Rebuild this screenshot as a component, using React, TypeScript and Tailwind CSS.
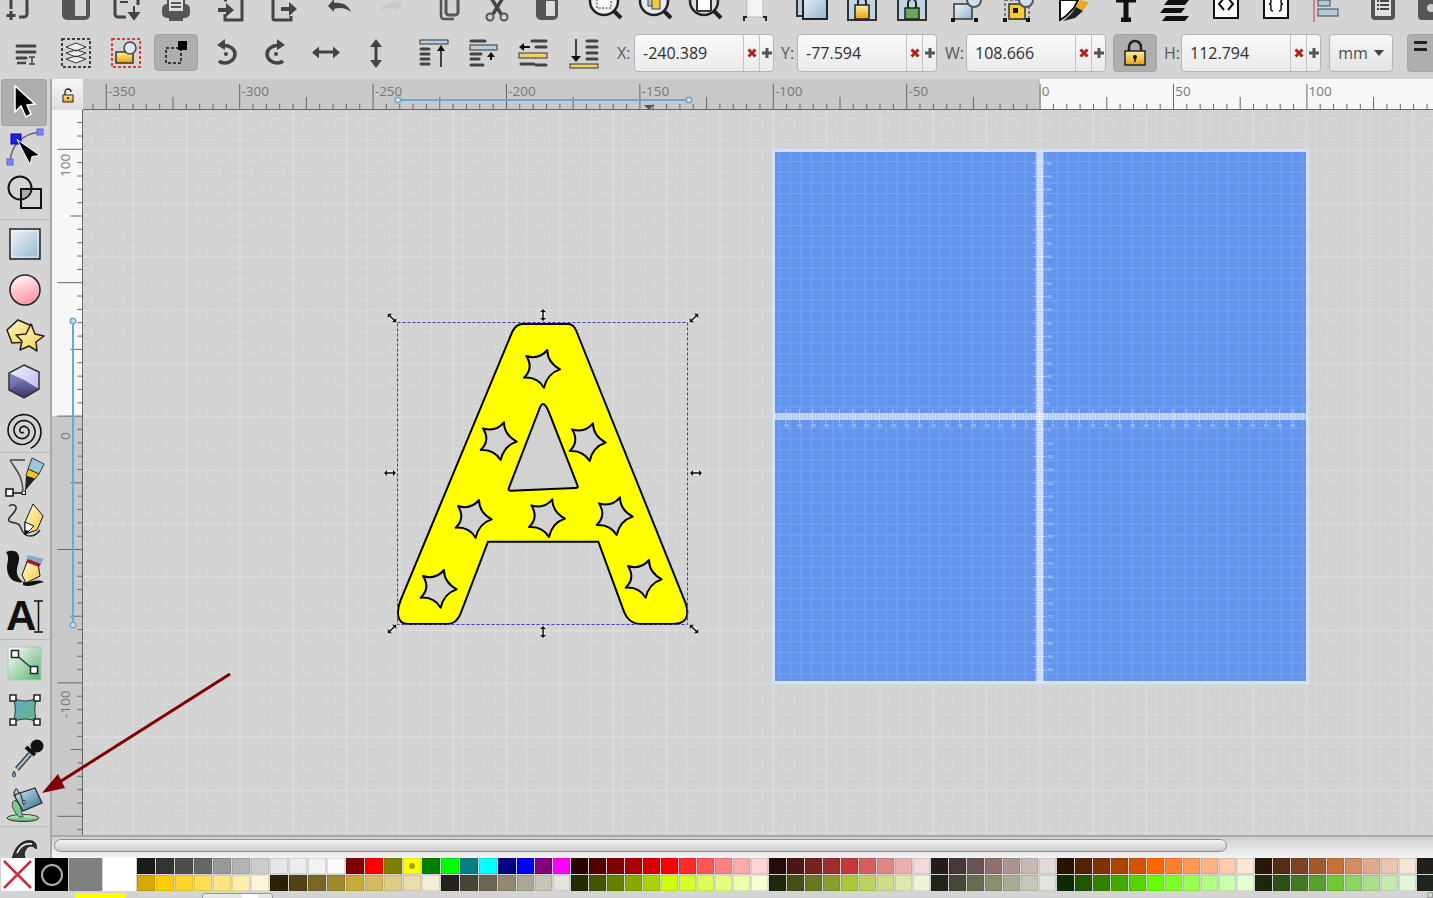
import type { ReactNode } from "react";

const D = "#444";

function I({ w = 50, h = 40, children }: { w?: number; h?: number; children: ReactNode }) {
  return (
    <svg width={w} height={h} viewBox={`0 0 ${w} ${h}`} className="shrink-0 block">
      {children}
    </svg>
  );
}

// top row is cut by the window, only the lower part of the icons shows
function Top({ className = "", children }: { className?: string; children: ReactNode }) {
  return (
    <div className={"w-[50px] shrink-0 " + className}>
      <svg width={50} height={36} viewBox="0 0 50 36" className="block">
        {children}
      </svg>
    </div>
  );
}

function Gradients() {
  const grad = (id: string, a: string, b: string, x2 = 1, y2 = 1) => (
    <linearGradient id={id} x1="0" y1="0" x2={x2} y2={y2}>
      <stop offset="0" stopColor={a} />
      <stop offset="1" stopColor={b} />
    </linearGradient>
  );
  return (
    <svg width="0" height="0" className="absolute">
      <defs>
        {grad("gBlue", "#f2f6fa", "#94b4d0")}
        {grad("gPink", "#ffffff", "#ff98a6", 0.4, 1)}
        {grad("gYel", "#fffbd0", "#f3cb3c")}
        {grad("gGold", "#fff0a0", "#e8a010", 0, 1)}
        {grad("gGreen", "#ffffff", "#58b070")}
        {grad("gMesh", "#5ea8d0", "#68b87c")}
        {grad("gBucket", "#d8eef4", "#2c6a90")}
        {grad("gPuddle", "#d8f4d8", "#50b060", 0, 1)}
        {grad("gBox", "#f0f0ff", "#b8b8f0")}
        {grad("gBoxD", "#7070b0", "#38386c", 0, 1)}
        <pattern id="pageGrid" x="1.1" y="1.1" width="10.67" height="10.67" patternUnits="userSpaceOnUse">
          <path d="M10.67 0H0V10.67" fill="none" stroke="#fff" strokeOpacity=".28" strokeWidth="1" />
        </pattern>
        <pattern id="aGrid" x="8" y="7" width="32" height="32" patternUnits="userSpaceOnUse">
          <path d="M32 0H0V32" fill="none" stroke="#fff" strokeOpacity=".28" strokeWidth="3" />
        </pattern>
      </defs>
    </svg>
  );
}

function TopRow() {
  return (
    <div className="h-[26px] flex items-end pb-[4px] overflow-hidden -ml-[4px] shrink-0">
      <Top>
        <path d="M31 14v14a3 3 0 0 1-3 3h-5M15 14v9" fill="none" stroke={D} strokeWidth="3" />
        <path d="M15 25v9M10.5 29.5h9" stroke={D} strokeWidth="3" />
      </Top>
      <Top className="ml-[5px]">
        <rect x="11" y="2" width="28" height="32" rx="5" fill="#555" />
        <rect x="24" y="14" width="11" height="16" rx="1" fill="#d4d4d4" />
      </Top>
      <Top>
        <path d="M14 14v14a3 3 0 0 0 3 3h8M37 14v5" fill="none" stroke={D} strokeWidth="3" />
        <path d="M33 20v9M28.5 27h9l-4.5 6z" fill={D} stroke={D} strokeWidth="2" />
        <path d="M19 16h8" stroke={D} strokeWidth="2" />
      </Top>
      <Top>
        <rect x="11" y="18" width="28" height="14" rx="5" fill="#555" />
        <rect x="17" y="4" width="16" height="22" fill="#ddd" stroke="#555" strokeWidth="2" />
        <path d="M20 17h10M20 21h10" stroke="#555" strokeWidth="2" />
        <rect x="18" y="28" width="14" height="7" fill="#555" />
      </Top>
      <Top className="ml-[6px]">
        <path d="M17 14h3M35 14v20H18v-6" fill="none" stroke={D} strokeWidth="3" />
        <path d="M11 22h8v-5l8 7-8 7v-5h-8z" fill={D} />
      </Top>
      <Top className="ml-[2px]">
        <path d="M14 14v18a2 2 0 0 0 2 2h16v-4" fill="none" stroke={D} strokeWidth="3" />
        <path d="M22 21h8v-5l8 7-8 7v-5h-8z" fill={D} />
      </Top>
      <Top className="ml-[6px]">
        <path d="M13 21l6-7v4c9-1 15 3 17 9-5-4-10-5-17-3v3z" fill="#444" transform="translate(0 -1)" />
      </Top>
      <Top>
        <path d="M37 21l-6-7v4c-9-1-15 3-17 9 5-4 10-5 17-3v3z" fill="#c8c8c8" transform="translate(0 -1)" />
      </Top>
      <Top className="ml-[7px]">
        <path d="M19 8v22a3 3 0 0 0 3 3h10" fill="none" stroke="#555" strokeWidth="2.5" />
        <rect x="24" y="4" width="12" height="25" rx="3" fill="none" stroke="#555" strokeWidth="3" />
      </Top>
      <Top>
        <path d="M18 10l11 18M32 10l-11 18" stroke="#444" strokeWidth="3.5" />
        <circle cx="18" cy="31" r="3.5" fill="none" stroke="#555" strokeWidth="2" />
        <circle cx="32" cy="31" r="3.5" fill="none" stroke="#555" strokeWidth="2" />
      </Top>
      <Top>
        <rect x="14" y="4" width="22" height="30" rx="5" fill="#555" />
        <rect x="24" y="15" width="9" height="15" rx="1" fill="#ddd" />
      </Top>
      <Top className="ml-[8px]">
        <circle cx="24" cy="15" r="14" fill="#eee" stroke="#222" strokeWidth="2.5" />
        <rect x="17" y="8" width="14" height="14" fill="#fff" stroke="#333" strokeDasharray="2 1.5" />
        <path d="M34 25l7 7" stroke="#222" strokeWidth="4" />
      </Top>
      <Top>
        <circle cx="24" cy="15" r="14" fill="#e4ecf2" stroke="#222" strokeWidth="2.5" />
        <rect x="18" y="9" width="9" height="11" fill="#a8c4d8" stroke="#444" />
        <rect x="22" y="13" width="8" height="10" fill="#f6c93a" stroke="#444" />
        <path d="M34 25l7 7" stroke="#222" strokeWidth="4" />
      </Top>
      <Top>
        <circle cx="24" cy="15" r="14" fill="#ddd" stroke="#222" strokeWidth="2.5" />
        <rect x="17" y="6" width="14" height="19" rx="1" fill="#fff" stroke="#333" strokeWidth="2" />
        <path d="M34 25l7 7" stroke="#222" strokeWidth="4" />
      </Top>
      <Top>
        <rect x="17" y="4" width="16" height="27" fill="#f4f4f4" stroke="#bbb" />
        <path d="M14 35v-4h3M36 35v-4h-3" fill="none" stroke="#222" strokeWidth="2" />
      </Top>
      <Top className="ml-[7px]">
        <rect x="10" y="2" width="14" height="28" fill="#b8cfe2" stroke="#333" strokeWidth="2" />
        <rect x="16" y="6" width="24" height="27" fill="url(#gBlue)" stroke="#222" strokeWidth="2" />
      </Top>
      <Top>
        <rect x="11" y="6" width="28" height="28" fill="#c0d4e4" stroke="#333" strokeWidth="2" />
        <rect x="18" y="19" width="14" height="14" fill="url(#gGold)" stroke="#222" strokeWidth="1.5" />
        <path d="M21 19v-3a4 4 0 0 1 8 0v3" fill="none" stroke="#222" strokeWidth="2" />
      </Top>
      <Top>
        <rect x="11" y="6" width="28" height="28" fill="#c0d4e4" stroke="#333" strokeWidth="2" />
        <rect x="18" y="22" width="14" height="11" fill="#68a858" stroke="#222" strokeWidth="1.5" />
        <path d="M21 22v-5a4 4 0 0 1 8 0v5" fill="none" stroke="#222" strokeWidth="2" />
      </Top>
      <Top className="ml-[5px]">
        <rect x="12" y="18" width="18" height="15" fill="url(#gBlue)" stroke="#333" strokeWidth="1.5" />
        <circle cx="32" cy="14" r="7" fill="#cfe0ee" stroke="#555" strokeWidth="2" />
        <rect x="9" y="32" width="4" height="4" fill="#111" />
        <rect x="32" y="32" width="4" height="4" fill="#111" />
      </Top>
      <Top className="ml-[1px]">
        <path d="M12 14h24v19H12z" fill="none" stroke="#222" strokeDasharray="3 2" />
        <rect x="16" y="18" width="16" height="15" fill="#f6c93a" stroke="#333" strokeWidth="1.5" />
        <rect x="20" y="22" width="5" height="5" fill="#111" />
        <circle cx="33" cy="14" r="7" fill="#cfe0ee" stroke="#555" strokeWidth="2" />
        <rect x="10" y="32" width="4" height="4" fill="#111" />
        <rect x="33" y="32" width="4" height="4" fill="#111" />
      </Top>
      <Top className="ml-[7px]">
        <path d="M10 14h18l-4 8-8 8-6 4z" fill="#fff" stroke="#111" strokeWidth="2" />
        <path d="M30 14l9 2-6 9-7-4z" fill="#e8a820" />
        <path d="M26 21l7 4-8 7-12 3c4-3 8-6 13-14z" fill="#222" />
      </Top>
      <Top className="ml-[1px]">
        <path d="M15 14h20M25 10v24M20 34h10" stroke="#111" strokeWidth="5" />
      </Top>
      <Top>
        <path d="M17 14h21l-4 5H13zM13 22h21l-4 5H9zM15 30h23l-4 5H11z" fill="#111" />
      </Top>
      <Top>
        <rect x="13" y="4" width="24" height="28" fill="#fdfdfd" stroke="#111" strokeWidth="2" />
        <path d="M23 12l-5 6 5 6M27 12l5 6-5 6" fill="none" stroke="#111" strokeWidth="2" />
      </Top>
      <Top>
        <rect x="13" y="4" width="24" height="28" fill="#fdfdfd" stroke="#111" strokeWidth="2" />
        <path d="M22 11c-3 0-2 3-2 5s-1 2-2 2c1 0 2 0 2 2s-1 5 2 5M28 11c3 0 2 3 2 5s1 2 2 2c-1 0-2 0-2 2s1 5-2 5" fill="none" stroke="#111" strokeWidth="1.5" />
      </Top>
      <Top>
        <path d="M13 0v36" stroke="#d03030" />
        <rect x="17" y="14" width="12" height="6" fill="#b0cade" stroke="#444" />
        <rect x="17" y="23" width="20" height="7" fill="#b0cade" stroke="#444" />
      </Top>
      <Top className="ml-[7px]">
        <rect x="13" y="2" width="24" height="32" rx="4" fill="#555" />
        <rect x="17" y="6" width="16" height="24" fill="#e0e0e0" />
        <path d="M19 15h12M19 19h12M19 23h12" stroke="#444" strokeWidth="2" strokeDasharray="2 1 9 0" />
      </Top>
      <Top className="-ml-[7px]">
        <rect x="17" y="4" width="24" height="30" rx="4" fill="#555" />
        <circle cx="30" cy="22" r="4" fill="#ccc" />
      </Top>
    </div>
  );
}

function Bars({ d }: { d: string }) {
  return <path d={d} fill="none" stroke={D} strokeWidth="3" strokeLinecap="round" />;
}

function SpinField({ label, value, labelClass }: { label: string; value: string; labelClass: string }) {
  return (
    <>
      <span className={"text-[16px] text-[#585858] shrink-0 text-left " + labelClass}>{label}</span>
      <div className="flex w-[140px] h-[38px] shrink-0 rounded-[4px] border border-[#b4b4b4] bg-gradient-to-b from-[#f9f9f9] to-[#ebebeb] overflow-hidden">
        <div className="w-[108px] pl-[8px] flex items-center text-[16px] text-[#2e2e2e] shrink-0">{value}</div>
        <div className="w-[16px] border-l border-[#c4c4c4] flex items-center justify-center shrink-0">
          <svg width="10" height="10" viewBox="0 0 10 10">
            <path d="M1.5 1.5l7 7M8.5 1.5l-7 7" stroke="#b02020" strokeWidth="3" />
          </svg>
        </div>
        <div className="flex-1 border-l border-[#c4c4c4] flex items-center justify-center">
          <svg width="10" height="10" viewBox="0 0 10 10">
            <path d="M5 0v10M0 5h10" stroke="#555" strokeWidth="3" />
          </svg>
        </div>
      </div>
    </>
  );
}

function CommandRow() {
  return (
    <div className="h-[53px] flex items-center shrink-0 pl-[1px] bg-[#d4d4d4]">
      <I>
        <Bars d="M16 13h18M16 19h18M16 25h9" />
        <path d="M28 24h6M31 24v7M28 31h6" stroke={D} strokeWidth="1.5" fill="none" />
        <path d="M16 30h9" stroke={D} strokeWidth="2.5" />
      </I>
      <I>
        <rect x="11" y="6" width="28" height="28" fill="none" stroke="#111" strokeWidth="1.5" strokeDasharray="3 2" />
        <path d="M15 14l10-4 10 4-10 4zM15 20l10-3 10 3-10 4zM15 26l10-3 10 3-10 4z" fill="#eee" stroke="#333" strokeLinejoin="round" />
      </I>
      <I>
        <rect x="11" y="6" width="28" height="28" fill="none" stroke="#d01010" strokeWidth="1.5" strokeDasharray="3 2" />
        <rect x="15" y="19" width="17" height="11" fill="url(#gGold)" stroke="#333" strokeWidth="1.5" />
        <circle cx="29" cy="15" r="6" fill="#dbe8f2" stroke="#444" strokeWidth="1.5" />
      </I>
      <div className="w-[44px] h-[37px] mx-[3px] rounded-[4px] bg-[#aeaeae] border border-[#a4a4a4] flex items-center justify-center shrink-0">
        <svg width="30" height="30" viewBox="0 0 30 30">
          <rect x="5" y="10" width="15" height="15" fill="none" stroke="#111" strokeWidth="1.5" strokeDasharray="3 2" />
          <rect x="17" y="3" width="9" height="9" fill="#000" />
        </svg>
      </div>
      <I w={50}>
        <path d="M20 13c8-2 14 3 14 8s-5 9-10 9c-3 0-5-1-6-2" fill="none" stroke="#444" strokeWidth="3.5" />
        <path d="M16 12l8-6v11z" fill="#444" />
        <circle cx="25" cy="21" r="2" fill="#444" />
      </I>
      <I>
        <path d="M30 13c-8-2-14 3-14 8s5 9 10 9c3 0 5-1 6-2" fill="none" stroke="#444" strokeWidth="3.5" />
        <path d="M34 12l-8-6v11z" fill="#444" />
        <circle cx="25" cy="21" r="2" fill="#444" />
      </I>
      <I>
        <path d="M15 19h20" stroke="#444" strokeWidth="3" />
        <path d="M11 19.5l7-6v12zM39 19.5l-7-6v12z" fill="#444" />
      </I>
      <I>
        <path d="M25 11v20" stroke="#444" strokeWidth="3" />
        <path d="M25 6l-6 8h12zM25 35l-6-8h12z" fill="#444" />
      </I>
      <div className="ml-[7px] shrink-0">
        <I>
          <rect x="12" y="7" width="28" height="4" fill="#b8cfe2" stroke="#333" strokeWidth="1" />
          <Bars d="M13 16h8M13 21h8M13 26h8M13 31h8" />
          <path d="M33 15v19" stroke="#111" strokeWidth="1.5" />
          <path d="M33 12l-4 6h8z" fill="#111" />
        </I>
      </div>
      <I>
        <Bars d="M13 8h14M13 26h8M13 32h12" />
        <rect x="12" y="12" width="27" height="5" fill="#b8cfe2" stroke="#333" />
        <Bars d="M13 21h10" />
        <path d="M33 19l-4 5h8z" fill="#111" />
        <path d="M33 23v4" stroke="#111" strokeWidth="2" />
      </I>
      <I>
        <Bars d="M24 8h14M28 14h10M28 32h10" />
        <rect x="11" y="20" width="28" height="5" fill="#f0cf6a" stroke="#333" />
        <path d="M22 14h-8" stroke="#111" strokeWidth="2" />
        <path d="M11 14l5-4v8z" fill="#111" />
        <Bars d="M13 31h13" />
      </I>
      <I>
        <Bars d="M29 8h10M29 14h10M29 20h10M29 26h10" />
        <path d="M18 6v19" stroke="#111" strokeWidth="1.5" />
        <path d="M18 29l-5-6h10z" fill="#111" />
        <rect x="12" y="31" width="28" height="4" fill="#f0cf6a" stroke="#333" />
      </I>
      <div className="pl-[9px] flex items-center">
        <SpinField label="X:" value="-240.389" labelClass="w-[17px]" />
        <SpinField label="Y:" value="-77.594" labelClass="w-[16px] ml-[7px]" />
        <SpinField label="W:" value="108.666" labelClass="w-[21px] ml-[8px]" />
        <div className="w-[44px] h-[38px] ml-[7px] rounded-[4px] bg-[#aeaeae] border border-[#a4a4a4] flex items-center justify-center shrink-0">
          <svg width="26" height="28" viewBox="0 0 26 28">
            <path d="M7 12V8a6 6 0 0 1 12 0v4" fill="none" stroke="#222" strokeWidth="2.5" />
            <rect x="3" y="12" width="20" height="14" fill="url(#gGold)" stroke="#222" strokeWidth="1.5" />
            <circle cx="13" cy="18" r="2" fill="#111" />
            <path d="M13 18v5" stroke="#111" strokeWidth="1.5" />
          </svg>
        </div>
        <SpinField label="H:" value="112.794" labelClass="w-[17px] ml-[7px]" />
        <div className="w-[64px] h-[38px] ml-[8px] rounded-[4px] border border-[#b4b4b4] bg-gradient-to-b from-[#f6f6f6] to-[#e4e4e4] flex items-center justify-center gap-[6px] text-[16px] text-[#4c4c4c] shrink-0">
          mm
          <svg width="10" height="6" viewBox="0 0 10 6">
            <path d="M0 0h10L5 6z" fill="#444" />
          </svg>
        </div>
        <div className="w-[30px] h-[38px] ml-[14px] rounded-[4px] bg-[#aeaeae] border border-[#a4a4a4] flex flex-col gap-[4px] pt-[6px] pl-[6px] shrink-0">
          <div className="w-[13px] h-[3px] bg-[#222]" />
          <div className="w-[13px] h-[3px] bg-[#222]" />
        </div>
      </div>
    </div>
  );
}

function Tool({ active, children }: { active?: boolean; children: ReactNode }) {
  return (
    <div className={"h-[46.5px] w-[46px] ml-[1px] shrink-0 rounded-[3px] " + (active ? "bg-[#aeaeae] border border-[#a4a4a4]" : "")}>
      <svg width="46" height="46" viewBox="0 0 46 46" className={active ? "-m-px" : ""}>
        {children}
      </svg>
    </div>
  );
}

function spiral(cx: number, cy: number) {
  let d = "";
  for (let t = 0; t <= 19; t += 0.25) {
    const r = 1 + t * 0.95;
    d += (t === 0 ? "M" : "L") + (cx + r * Math.cos(t + 1)).toFixed(1) + " " + (cy + r * Math.sin(t + 1)).toFixed(1);
  }
  return d;
}

function ToolSep() {
  return <div className="h-px bg-[#bcbcbc] w-[50px] shrink-0" />;
}

function ToolBar() {
  return (
    <div className="w-[52px] shrink-0 border-r-2 border-[#a8a8a8] flex flex-col overflow-hidden bg-[#d4d4d4]">
      <Tool active>
        <polygon points="14,7 14,33 20,27 25,38 30,35 26,26 34,25" fill="#000" stroke="#fff" strokeWidth="1.5" />
      </Tool>
      <Tool>
        <path d="M9 36C10 20 20 8 39 6" fill="none" stroke="#666" strokeWidth="1.5" />
        <rect x="6" y="33" width="6" height="6" fill="#8080ff" stroke="#6060e0" />
        <rect x="36" y="3" width="6" height="6" fill="#8080ff" stroke="#6060e0" />
        <rect x="10" y="8" width="10" height="10" fill="#2020e0" stroke="#0000c0" />
        <polygon points="16,13.5 39,29.5 31,30.5 29,38.5" fill="#000" stroke="#fff" />
      </Tool>
      <Tool>
        <rect x="20" y="17" width="20" height="19" fill="#d4d4d4" stroke="#111" strokeWidth="2" />
        <circle cx="19" cy="16" r="11.5" fill="none" stroke="#111" strokeWidth="2" />
        <path d="M21 18h8.500a11.500 11.500 0 0 1-8.500 8.500z" fill="#aaa" />
      </Tool>
      <ToolSep />
      <Tool>
        <rect x="9" y="9" width="30" height="30" fill="url(#gBlue)" stroke="#222" strokeWidth="1.5" />
        <rect x="11" y="11" width="26" height="26" fill="none" stroke="#fff" strokeOpacity=".7" />
      </Tool>
      <Tool>
        <circle cx="24" cy="24" r="15" fill="url(#gPink)" stroke="#222" strokeWidth="1.5" />
      </Tool>
      <Tool>
        <polygon points="17,7 31,13 27,29 11,30 6,17" fill="url(#gYel)" stroke="#222" strokeWidth="1.5" />
        <polygon points="30,11 34,21 43,23 35,29 36,38 28,33 19,37 21,28 15,22 25,21" fill="url(#gYel)" stroke="#222" strokeWidth="1.5" strokeLinejoin="round" />
      </Tool>
      <Tool>
        <polygon points="23,6 38,13 38,30 23,39 8,31 8,14" fill="url(#gBox)" />
        <polygon points="8,14 23,21 23,39 8,31" fill="url(#gBoxD)" opacity=".8" />
        <polygon points="23,21 38,30 23,39 8,31" fill="url(#gBoxD)" />
        <polygon points="23,6 38,13 38,30 23,39 8,31 8,14" fill="none" stroke="#333" strokeWidth="1.5" />
      </Tool>
      <Tool>
        <path d={spiral(22, 25)} fill="none" stroke="#111" strokeWidth="1.6" />
      </Tool>
      <ToolSep />
      <Tool>
        <path d="M9 7h15M9 7c5 9 12 14 13 30" fill="none" stroke="#444" strokeWidth="1.5" />
        <path d="M9 40h14" stroke="#111" strokeWidth="1.5" />
        <rect x="5" y="36" width="7" height="7" fill="#fff" stroke="#111" strokeWidth="1.5" />
        <rect x="21" y="38" width="3.5" height="3.5" fill="#fff" stroke="#111" />
        <polygon points="31,5 43,11 38,21 27,16" fill="#9cc8d8" stroke="#333" />
        <polygon points="27,16 38,21 34,26 25,23" fill="#f5c520" stroke="#333" />
        <polygon points="25,23 34,26 24,38" fill="#222" />
      </Tool>
      <Tool>
        <path d="M8 6c5-3 9 0 6 5s-8 7-6 10 8 0 11 5c2 5 4 10 10 10 5 0 8-3 10-6" fill="none" stroke="#333" strokeWidth="1.6" />
        <polygon points="32,4 42,16 36,30 24,34 24,22" fill="url(#gYel)" stroke="#111" />
        <polygon points="24,22 33,26 24,35" fill="#fff" stroke="#111" />
        <polygon points="24,30 28,31 24,36" fill="#111" />
      </Tool>
      <Tool>
        <path d="M5 6c8-3 14 0 13 8-1 7-6 14 4 22-8 2-16-4-16-14 0-7 3-10-1-16z" fill="#111" />
        <path d="M22 36c8 1 14-4 21 0-6 1-14 6-21 3z" fill="#111" />
        <polygon points="26,16 37,18 39,30 25,37 21,29" fill="url(#gYel)" stroke="#111" />
        <polygon points="27,9 43,13 39,19 25,14" fill="#84aec8" />
        <polygon points="27,13 40,18 38,21 25,16" fill="#a01830" />
      </Tool>
      <Tool>
        <text x="5" y="37" fontFamily="'Liberation Sans', sans-serif" fontWeight="700" fontSize="42" fill="#111">A</text>
        <path d="M33 8h9M37.5 8v31M33 39h9" fill="none" stroke="#111" strokeWidth="1.5" />
      </Tool>
      <ToolSep />
      <Tool>
        <rect x="7" y="7" width="33" height="33" fill="url(#gGreen)" stroke="#9ccfa8" />
        <path d="M14 14l19 16" stroke="#333" strokeWidth="1.5" />
        <rect x="10.5" y="10.5" width="7" height="7" fill="#fff" stroke="#222" strokeWidth="1.5" />
        <rect x="29.5" y="26.5" width="7" height="7" fill="#fff" stroke="#222" strokeWidth="1.5" />
      </Tool>
      <Tool>
        <path d="M12 11c8 4 16 4 24 0-3 8-3 16 0 24-8-4-16-4-24 0 3-8 3-16 0-24z" fill="url(#gMesh)" stroke="#333" />
        <rect x="9" y="8" width="6" height="6" fill="#fff" stroke="#222" strokeWidth="1.5" />
        <rect x="33" y="8" width="6" height="6" fill="#fff" stroke="#222" strokeWidth="1.5" />
        <rect x="9" y="32" width="6" height="6" fill="#fff" stroke="#222" strokeWidth="1.5" />
        <rect x="33" y="32" width="6" height="6" fill="#fff" stroke="#222" strokeWidth="1.5" />
      </Tool>
      <Tool>
        <path d="M16 36l13-15" stroke="#333" strokeWidth="5" />
        <path d="M16 36l13-15" stroke="#9cc0e0" strokeWidth="2.5" />
        <path d="M25 14l9 8" stroke="#111" strokeWidth="4" />
        <circle cx="36" cy="13" r="6.5" fill="#111" />
        <path d="M13 38c-2 2-2 6 0 6s2-4 0-6z" fill="#5a90c0" stroke="#345" />
      </Tool>
      <Tool>
        <ellipse cx="22" cy="38" rx="16" ry="3.5" fill="url(#gPuddle)" stroke="#333" />
        <path d="M14 20c-5 3-3 9 4 17h4c-1-4-3-8-2-12z" fill="#78c890" stroke="#444" />
        <path d="M13 15l21-7 7 15-19 8z" fill="url(#gBucket)" stroke="#222" strokeWidth="1.2" />
        <path d="M18 14c-2-6-3-7-5-1l2 3M19 12l4 13" fill="none" stroke="#333" strokeWidth="1.2" />
        <circle cx="23" cy="22" r="1.5" fill="#ddd" stroke="#333" />
      </Tool>
      <ToolSep />
      <Tool>
        <path d="M11 34c2-14 10-22 20-20 4 1 5 5 4 8-3-4-7-4-10 0-3 5-2 9 1 12H11z" fill="#333" stroke="#111" />
        <path d="M16 26c3-7 8-10 15-9" fill="none" stroke="#fff" strokeWidth="1.5" />
      </Tool>
    </div>
  );
}

const mark = (i: number) => (i % 10 === 0 ? 0 : i % 5 === 0 ? 1 : 2);
const tickLen = [25, 12, 5];

function HRuler() {
  const ticks = [];
  for (let i = -4; i < 102; i++) {
    const x = 23.3 + i * 13.34;
    const k = ((i % 10) + 10) % 10;
    ticks.push(<path key={i} d={`M${x.toFixed(1)} 30v-${tickLen[mark(k)]}`} stroke="#666" strokeWidth="1" />);
  }
  const labels = ["-350", "-300", "-250", "-200", "-150", "-100", "-50", "0", "50", "100"];
  return (
    <svg width="1350" height="31" viewBox="0 0 1350 31" className="block shrink-0">
      <rect width="1350" height="31" fill="#c8c8c8" />
      <rect x="957" width="393" height="31" fill="#f7f7f7" />
      <path d="M0 30.5h1350" stroke="#666" />
      {ticks}
      {labels.map((l, i) => (
        <text key={l} x={25 + i * 133.4} y="17" fontFamily="'Open Sans', sans-serif" fontSize="13.5" fill="#777">
          {l}
        </text>
      ))}
      <path d="M315 21h291" stroke="#6aa9cf" strokeWidth="2" />
      <circle cx="315" cy="21" r="2.8" fill="#dde" stroke="#6aa9cf" strokeWidth="1.5" />
      <circle cx="606" cy="21" r="2.8" fill="#dde" stroke="#6aa9cf" strokeWidth="1.5" />
      <path d="M561 26h10l-5 5z" fill="#555" />
    </svg>
  );
}

function VRuler() {
  const ticks = [];
  for (let i = -4; i < 60; i++) {
    const y = 39.3 + i * 13.34;
    const k = ((i % 10) + 10) % 10;
    ticks.push(<path key={i} d={`M30.5 ${y.toFixed(1)}h-${tickLen[mark(k)]}`} stroke="#666" strokeWidth="1" />);
  }
  return (
    <svg width="31" height="725" viewBox="0 0 31 725" className="block shrink-0">
      <rect width="31" height="725" fill="#c8c8c8" />
      <rect width="31" height="306" fill="#f7f7f7" />
      <path d="M30.5 0v725" stroke="#666" />
      {ticks}
      {[
        ["100", 49],
        ["0", 312],
        ["-100", 590],
      ].map(([l, y]) => (
        <text key={l} transform={`translate(18 ${Number(y) + 18}) rotate(-90)`} fontFamily="'Open Sans', sans-serif" fontSize="13.5" fill="#777">
          {l}
        </text>
      ))}
      <path d="M21 211v304" stroke="#6aa9cf" strokeWidth="2" />
      <circle cx="21" cy="211" r="2.8" fill="#dde" stroke="#6aa9cf" strokeWidth="1.5" />
      <circle cx="21" cy="515" r="2.8" fill="#dde" stroke="#6aa9cf" strokeWidth="1.5" />
    </svg>
  );
}

const starPts = "M15 -55Q15 -18 53 3Q15 15 5 58Q-15 25 -55 28Q-25 0 -48 -37Q-10 -25 15 -55Z";
const starAt = [
  [490, 190],
  [360, 407],
  [627, 410],
  [285, 640],
  [505, 638],
  [708, 632],
  [180, 850],
  [795, 820],
];
const outline =
  "M430 57H568C580 57 588 68 592 78L920 895C935 940 915 957 880 957H790C760 957 745 945 735 920L658 710H327L245 925C235 950 222 957 205 957H85C55 955 50 925 65 885L400 80C408 65 415 57 430 57Z";
const hole = "M492 297C500 297 506 312 510 322L595 540C598 548 595 549 588 549L395 557C388 557 388 552 390 548L480 315C484 303 488 297 492 297Z";

function DoubleArrow({ x, y, a }: { x: number; y: number; a: number }) {
  return (
    <g transform={`translate(${x} ${y}) rotate(${a})`}>
      <path d="M-6 0h12" stroke="#e8e8e8" strokeWidth="5" />
      <path d="M-4 0h8" stroke="#111" strokeWidth="1.5" />
      <path d="M-6 0l3-3v6zM6 0l-3-3v6z" fill="#111" />
    </g>
  );
}

function Artwork() {
  const hticks = [];
  for (let i = -100; i <= 100; i++) {
    const x = 1040.5 + i * 2.668;
    if (x > 776 && x < 1306) hticks.push(<path key={"h" + i} d={i % 5 === 0 ? `M${x} 409V423` : `M${x} 413V420`} stroke="#fff" strokeOpacity=".6" strokeWidth=".8" />);
    const y = 416.5 + i * 2.668;
    if (y > 152 && y < 681) hticks.push(<path key={"v" + i} d={i % 5 === 0 ? `M1034 ${y}H1047` : `M1037 ${y}H1044`} stroke="#fff" strokeOpacity=".6" strokeWidth=".8" />);
  }
  const nums = [];
  for (let n = -95; n <= 95; n += 5) {
    if (n === 0) continue;
    nums.push(
      <text key={"a" + n} x={1040.5 + n * 2.668} y="427" textAnchor="middle" fontSize="4" fill="#dbe6fb" fontFamily="'Liberation Sans', sans-serif">
        {n}
      </text>,
      <text key={"b" + n} x="1048" y={416.5 + n * 2.668 + 1.5} fontSize="4" fill="#dbe6fb" fontFamily="'Liberation Sans', sans-serif">
        {-n}
      </text>
    );
  }
  return (
    <svg width="1349" height="725" viewBox="84 110 1349 725" className="absolute inset-0">
      <rect x="774.5" y="150.5" width="534" height="532" fill="#6495ed" stroke="#d2e0f8" strokeWidth="3" />
      <rect x="776" y="152" width="531" height="529" fill="url(#pageGrid)" />
      <rect x="1037.5" y="152" width="7" height="529" fill="#dbe6fb" fillOpacity=".8" />
      <rect x="776" y="413" width="531" height="7" fill="#dbe6fb" fillOpacity=".6" />
      {hticks}
      {nums}

      <g transform="translate(380 305) scale(.33333)">
        <path d={outline} fill="#ffff00" stroke="#000" strokeWidth="6" />
        <path d={hole} fill="#d2d2d2" stroke="#000" strokeWidth="6" />
        {starAt.map(([x, y]) => (
          <path key={x} d={starPts} transform={`translate(${x} ${y})`} fill="#d2d2d2" stroke="#000" strokeWidth="6" strokeLinejoin="round" />
        ))}
      </g>

      <rect x="398.5" y="322.5" width="290" height="302" fill="none" stroke="#3a3ab0" strokeWidth="1" strokeDasharray="3 2" />
      <DoubleArrow x={393} y={318} a={45} />
      <DoubleArrow x={695} y={318} a={-45} />
      <DoubleArrow x={393} y={629} a={-45} />
      <DoubleArrow x={695} y={629} a={45} />
      <DoubleArrow x={544} y={315} a={90} />
      <DoubleArrow x={544} y={632} a={90} />
      <DoubleArrow x={391} y={473} a={0} />
      <DoubleArrow x={697} y={473} a={0} />
    </svg>
  );
}

const topColors = [
  "#1a1a1a", "#333333", "#4d4d4d", "#666666", "#999999", "#b3b3b3", "#cccccc", "#e6e6e6", "#ececec", "#f2f2f2", "#f9f9f9",
  "#800000", "#ff0000", "#808000", "#ffff00", "#008000", "#00ff00", "#008080", "#00ffff", "#000080", "#0000ff", "#800080", "#ff00ff",
  "#2b0000", "#550000", "#800000", "#aa0000", "#d40000", "#ff0000", "#ff2a2a", "#ff5555", "#ff8080", "#ffaaaa", "#ffd5d5",
  "#280b0b", "#501616", "#782121", "#a02c2c", "#c83737", "#d35f5f", "#de8787", "#e9afaf", "#f4d7d7",
  "#241c1c", "#483737", "#6c5353", "#916f6f", "#ac9393", "#c8b7b7", "#e3dbdb",
  "#2b1100", "#552200", "#803300", "#aa4400", "#d45500", "#ff6600", "#ff7f2a", "#ff9955", "#ffb380", "#ffccaa", "#ffe6d5",
  "#28170b", "#502d16", "#784421", "#a05a2c", "#c87137", "#d38d5f", "#deaa87", "#e9c6af", "#f4e3d7", "#241f1c",
];
const bottomColors = [
  "#d4aa00", "#ffcc00", "#ffd42a", "#ffdd55", "#ffe680", "#ffeeaa", "#fff6d5",
  "#28220b", "#504416", "#786721", "#a0892c", "#c8ab37", "#d3bc5f", "#decd87", "#e9ddaf", "#f4eed7",
  "#24221c", "#484537", "#6c6753", "#918a6f", "#aca793", "#c8c4b7", "#e3e2db",
  "#222b00", "#445500", "#668000", "#88aa00", "#aad400", "#ccff00", "#d4ff2a", "#ddff55", "#e5ff80", "#eeffaa", "#f6ffd5",
  "#1e280b", "#445016", "#677821", "#89a02c", "#abc837", "#bcd35f", "#cdde87", "#dde9af", "#eef4d7",
  "#22241c", "#454837", "#676c53", "#8a916f", "#a7ac93", "#c4c8b7", "#e2e3db",
  "#112b00", "#225500", "#338000", "#44aa00", "#55d400", "#66ff00", "#7fff2a", "#99ff55", "#b3ff80", "#ccffaa", "#e5ffd5",
  "#1c280b", "#2d5016", "#447821", "#5aa02c", "#71c837", "#8dd35f", "#aade87", "#c6e9af", "#e3f4d7", "#1f241c",
];

function Palette() {
  return (
    <div className="h-[34px] flex shrink-0 bg-[#d4d4d4] overflow-hidden">
      <div className="w-[33px] h-[33px] ml-px mr-[1px] bg-white flex items-center justify-center shrink-0">
        <svg width="33" height="33" viewBox="0 0 33 33">
          <path d="M3 3l27 27M30 3L3 30" stroke="#c83040" strokeWidth="2.5" />
        </svg>
      </div>
      <div className="w-[33px] h-[33px] mr-[1px] bg-black flex items-center justify-center shrink-0">
        <div className="w-[22px] h-[22px] rounded-full border-2 border-[#b0b0b0]" />
      </div>
      <div className="w-[33px] h-[33px] mr-[1px] bg-[#808080] shrink-0" />
      <div className="w-[33px] h-[33px] mr-[1px] bg-white shrink-0" />
      <div className="grid grid-cols-[repeat(20,19px)_repeat(51,18px)] grid-rows-[16px_16px] gap-y-px shrink-0">
        {topColors.map((c, i) => (
          <div key={"t" + i} className="mr-px border border-black/10 flex items-center justify-center" style={{ background: c }}>
            {i === 14 && <div className="w-[6px] h-[6px] rounded-full bg-[#a0a000]" />}
          </div>
        ))}
        {bottomColors.map((c, i) => (
          <div key={"b" + i} className="mr-px border border-black/10" style={{ background: c }} />
        ))}
      </div>
    </div>
  );
}

function StatusBar() {
  return (
    <div className="h-[6px] flex shrink-0 bg-[#d4d4d4] overflow-hidden">
      <div className="ml-[75px] w-[50px] h-[6px] mt-px bg-[#ffff00] rounded-t-[2px]" />
      <div className="ml-[77px] w-[71px] h-[6px] mt-px bg-[#e6e6e6] border border-[#999] rounded-t-[3px] flex">
        <div className="ml-[39px] w-[16px] bg-white" />
      </div>
      <div className="ml-auto w-[6px] h-[6px] border border-[#999] rounded-tl-[3px]" />
    </div>
  );
}

export default function App() {
  return (
    <div className="w-[1433px] h-[898px] relative overflow-hidden flex flex-col bg-[#d4d4d4] font-['Open_Sans',sans-serif]">
      <Gradients />
      <TopRow />
      <CommandRow />
      <div className="flex flex-1 min-h-0">
        <ToolBar />
        <div className="flex-1 min-w-0 flex flex-col">
          <div className="h-[31px] flex shrink-0">
            <div className="w-[31px] bg-gradient-to-b from-[#f6f6f6] to-[#dcdcdc] flex items-center justify-center shrink-0">
              <svg width="14" height="16" viewBox="0 0 14 16">
                <path d="M4 8V5a3 3 0 0 1 6 0" fill="none" stroke="#222" strokeWidth="1.3" />
                <rect x="2" y="8" width="10" height="7" fill="url(#gGold)" stroke="#222" />
                <circle cx="7" cy="11" r="1" fill="#111" />
              </svg>
            </div>
            <HRuler />
          </div>
          <div className="h-[725px] flex shrink-0">
            <VRuler />
            <div className="relative flex-1 overflow-hidden bg-[#d2d2d2] bg-[linear-gradient(#dddddd_1px,transparent_1px),linear-gradient(90deg,#dddddd_1px,transparent_1px),linear-gradient(#d9d9d9_1px,transparent_1px),linear-gradient(90deg,#d9d9d9_1px,transparent_1px)] bg-[size:53.35px_53.35px,53.35px_53.35px,10.67px_10.67px,10.67px_10.67px] bg-[position:50px_40px,50px_40px,7px_8px,7px_8px]">
              <Artwork />
            </div>
          </div>
          <div className="flex-1 border-t-2 border-[#a8a8a8] bg-gradient-to-b from-[#cfcfcf] to-[#f4f4f4] pl-[2px] pt-[2px]">
            <div className="w-[1173px] h-[13px] rounded-full border border-[#8c8c8c] bg-gradient-to-b from-[#f2f2f2] to-[#cccccc]" />
          </div>
        </div>
      </div>
      <Palette />
      <StatusBar />
      <svg width="240" height="140" viewBox="0 0 240 140" className="absolute left-0 top-[665px] pointer-events-none">
        <path d="M230 9L58 118" stroke="#800000" strokeWidth="3" />
        <path d="M42 128L58 109L65 123z" fill="#800000" />
      </svg>
    </div>
  );
}
